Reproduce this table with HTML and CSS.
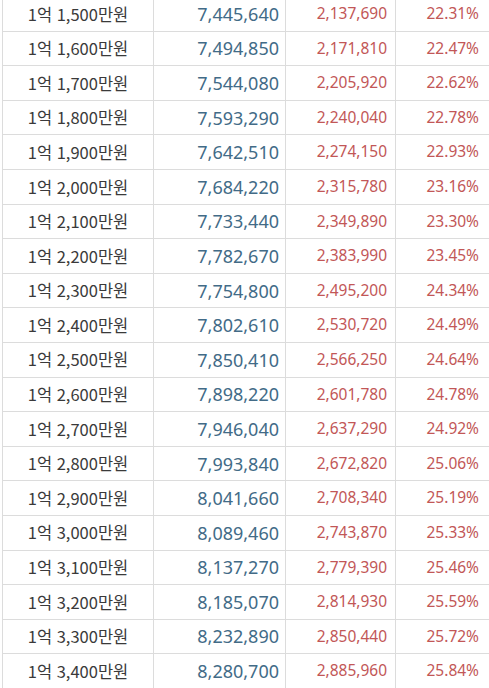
FILE: index.html
```html
<!DOCTYPE html>
<html lang="ko">
<head>
<meta charset="utf-8">
<link rel="stylesheet" href="styles.css">
</head>
<body>
<div class="wrap">
<table class="tax">
<colgroup><col class="c1"><col class="c2"><col class="c3"><col class="c4"></colgroup>
<tbody>
<tr><td class="salary">1억 1,500만원</td><td class="net">7,445,640</td><td class="tax-amt">2,137,690</td><td class="rate">22.31%</td></tr>
<tr><td class="salary">1억 1,600만원</td><td class="net">7,494,850</td><td class="tax-amt">2,171,810</td><td class="rate">22.47%</td></tr>
<tr><td class="salary">1억 1,700만원</td><td class="net">7,544,080</td><td class="tax-amt">2,205,920</td><td class="rate">22.62%</td></tr>
<tr><td class="salary">1억 1,800만원</td><td class="net">7,593,290</td><td class="tax-amt">2,240,040</td><td class="rate">22.78%</td></tr>
<tr><td class="salary">1억 1,900만원</td><td class="net">7,642,510</td><td class="tax-amt">2,274,150</td><td class="rate">22.93%</td></tr>
<tr><td class="salary">1억 2,000만원</td><td class="net">7,684,220</td><td class="tax-amt">2,315,780</td><td class="rate">23.16%</td></tr>
<tr><td class="salary">1억 2,100만원</td><td class="net">7,733,440</td><td class="tax-amt">2,349,890</td><td class="rate">23.30%</td></tr>
<tr><td class="salary">1억 2,200만원</td><td class="net">7,782,670</td><td class="tax-amt">2,383,990</td><td class="rate">23.45%</td></tr>
<tr><td class="salary">1억 2,300만원</td><td class="net">7,754,800</td><td class="tax-amt">2,495,200</td><td class="rate">24.34%</td></tr>
<tr><td class="salary">1억 2,400만원</td><td class="net">7,802,610</td><td class="tax-amt">2,530,720</td><td class="rate">24.49%</td></tr>
<tr><td class="salary">1억 2,500만원</td><td class="net">7,850,410</td><td class="tax-amt">2,566,250</td><td class="rate">24.64%</td></tr>
<tr><td class="salary">1억 2,600만원</td><td class="net">7,898,220</td><td class="tax-amt">2,601,780</td><td class="rate">24.78%</td></tr>
<tr><td class="salary">1억 2,700만원</td><td class="net">7,946,040</td><td class="tax-amt">2,637,290</td><td class="rate">24.92%</td></tr>
<tr><td class="salary">1억 2,800만원</td><td class="net">7,993,840</td><td class="tax-amt">2,672,820</td><td class="rate">25.06%</td></tr>
<tr><td class="salary">1억 2,900만원</td><td class="net">8,041,660</td><td class="tax-amt">2,708,340</td><td class="rate">25.19%</td></tr>
<tr><td class="salary">1억 3,000만원</td><td class="net">8,089,460</td><td class="tax-amt">2,743,870</td><td class="rate">25.33%</td></tr>
<tr><td class="salary">1억 3,100만원</td><td class="net">8,137,270</td><td class="tax-amt">2,779,390</td><td class="rate">25.46%</td></tr>
<tr><td class="salary">1억 3,200만원</td><td class="net">8,185,070</td><td class="tax-amt">2,814,930</td><td class="rate">25.59%</td></tr>
<tr><td class="salary">1억 3,300만원</td><td class="net">8,232,890</td><td class="tax-amt">2,850,440</td><td class="rate">25.72%</td></tr>
<tr><td class="salary">1억 3,400만원</td><td class="net">8,280,700</td><td class="tax-amt">2,885,960</td><td class="rate">25.84%</td></tr>
</tbody>
</table>
</div>
</body>
</html>
```
FILE: styles.css
```css
html, body {
  margin: 0;
  padding: 0;
  background: #ffffff;
  overflow: hidden;
}
.wrap {
  margin-top: -4px;
  padding-left: 2px;
}
.tax {
  border-collapse: collapse;
  table-layout: fixed;
  width: 496px;
  font-family: "Noto Sans", "Noto Sans CJK KR", sans-serif;
}
.c1 { width: 151px; }
.c2 { width: 132px; }
.c3 { width: 110px; }
.c4 { width: 103px; }
.tax tr { height: 34.6px; }
.tax td {
  border: 1px solid #dcdcdc;
  padding: 0 8px;
  white-space: nowrap;
  line-height: 1;
}
.salary {
  text-align: center;
  font-family: "Noto Sans CJK KR", sans-serif;
  font-size: 16.5px;
  font-weight: 400;
  color: #3a3a3a;
  padding: 0 !important;
}
.net {
  text-align: right;
  font-size: 18px;
  color: #426b87;
  padding-right: 6px !important;
}
.tax-amt, .rate {
  text-align: right;
  font-size: 15.5px;
  color: #c25757;
}
.rate { padding-right: 19px !important; }
```
